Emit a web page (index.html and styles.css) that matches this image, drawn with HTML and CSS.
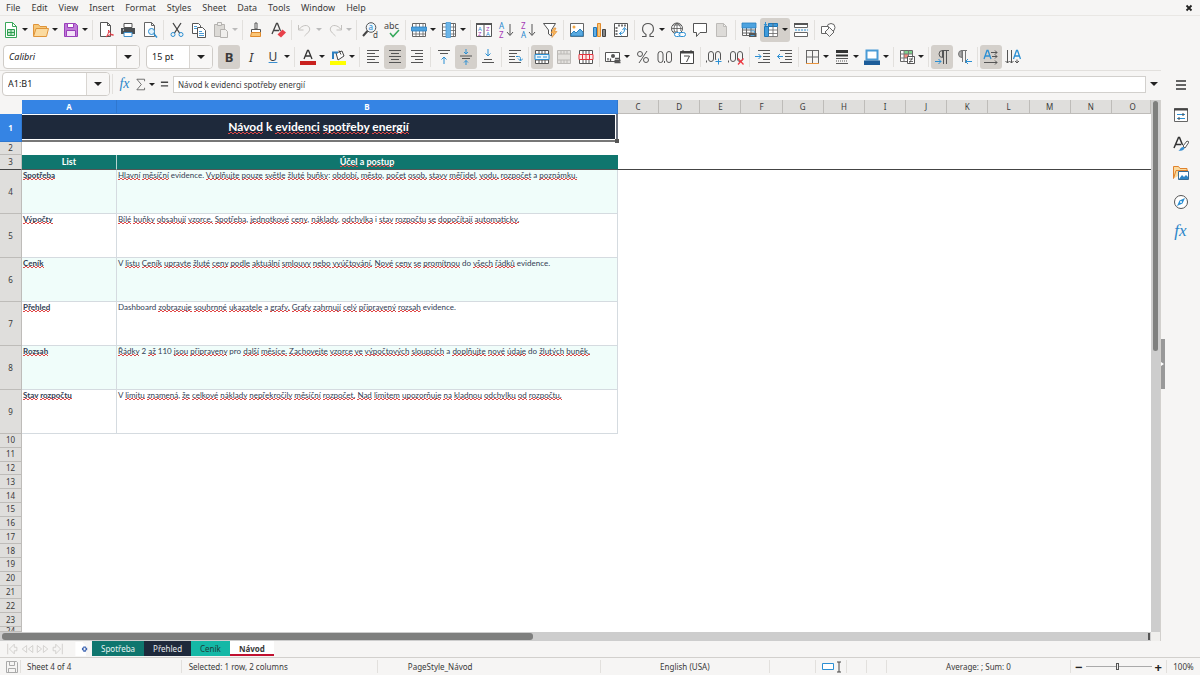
FILE: index.html
```html
<!DOCTYPE html>
<html lang="cs">
<head>
<meta charset="utf-8">
<title>Návod</title>
<link rel="stylesheet" href="styles.css">
</head>
<body>
<svg class="defs" aria-hidden="true">
  <symbol id="new" viewBox="0 0 16 16"><path d="M2.500 .5h7l4 4v11h-11z" fill="#fff" stroke="#3aa75a"/><path d="M9.500.5v4h4" fill="none" stroke="#3aa75a"/><path d="M4.500 7.500h7v6h-7zM4.500 10.500h7M8 7.500v6" fill="#bfe8c8" stroke="#2e9e50"/></symbol>
  <symbol id="open" viewBox="0 0 16 16"><path d="M.5 14V2.500h5l1.500 2h6.500V7" fill="#f6c87a" stroke="#e0953a"/><path d="M.5 14.500l2.500-8h12.500l-2 8z" fill="#fbdba0" stroke="#e0953a"/></symbol>
  <symbol id="save" viewBox="0 0 16 16"><path d="M1.500 1.500h11l2 2v11h-13z" fill="#c07bd8" stroke="#9a3fbb"/><path d="M4.500 1.500h6v4h-6z" fill="#fff" stroke="#9a3fbb"/><path d="M3.500 8.500h9v6h-9z" fill="#f3e2f8" stroke="#9a3fbb"/></symbol>
  <symbol id="pdf" viewBox="0 0 16 16"><path d="M2.500.5h7l3 3v11h-10zM9.500.5v3h3" fill="#fff" stroke="#555"/><path d="M8 15c2-2 3-5 2.500-7C12 11 13 13 15.500 13 12 12.500 10 13 8 15z" fill="none" stroke="#e0353f"/></symbol>
  <symbol id="print" viewBox="0 0 16 16"><path d="M4 1.500h8v4H4z" fill="#fff" stroke="#555"/><path d="M1 6h14v6H1z" fill="#4b4f52"/><path d="M4 10.500h8v4H4z" fill="#fff" stroke="#3f8fc9"/><path d="M3 8h1" stroke="#fff"/></symbol>
  <symbol id="preview" viewBox="0 0 16 16"><path d="M2.500.5h7l3 3v11h-10zM9.500.5v3h3" fill="#fff" stroke="#666"/><circle cx="9.500" cy="9.500" r="3" fill="#e2f2fc" stroke="#2b8fd3"/><path d="M12 12l3 3.500" stroke="#2b8fd3" stroke-width="1.500"/></symbol>
  <symbol id="cut" viewBox="0 0 16 16"><path d="M4 1l6.500 10M12 1L5.500 11" stroke="#444" stroke-width="1.300"/><circle cx="4" cy="12.500" r="2" fill="none" stroke="#2b8fd3"/><circle cx="12" cy="12.500" r="2" fill="none" stroke="#2b8fd3"/></symbol>
  <symbol id="copy" viewBox="0 0 16 16"><path d="M1.500 1.500h6l2 2v8h-8z" fill="#fff" stroke="#555"/><path d="M6.500 5.500h5l3 3v7h-8z" fill="#fff" stroke="#555"/><path d="M3 4.500h3M3 6.500h3M8 9.500h3M8 11.500h5M8 13.500h5" stroke="#4a9bd5"/></symbol>
  <symbol id="paste" viewBox="0 0 16 16"><path d="M1.500 2.500h10v12h-10z" fill="#dcdad6" stroke="#b5b3b0"/><path d="M4.500.5h4v3h-4zM7.500 7.500h5l2 2v6h-7z" fill="#f0efed" stroke="#b5b3b0"/></symbol>
  <symbol id="brush" viewBox="0 0 16 16"><path d="M7 1h2v6H7zM3.500 7.500h9v3h-9z" fill="#fff" stroke="#555"/><path d="M3.500 10.500h9v4h-10z" fill="#fbc677" stroke="#e08a2c"/></symbol>
  <symbol id="clear" viewBox="0 0 16 16"><path d="M2 12L6.500 1.500h1L10.500 9M4 8.500h5" fill="none" stroke="#444" stroke-width="1.300"/><path d="M7.500 12.500l5-5 3.500 3-5 5z" fill="#e8414a"/></symbol>
  <symbol id="undo" viewBox="0 0 16 16"><path d="M1.500 3v5h5M2 7.500C5 3 11 2 12.500 6c1 3-2 5-5 8" fill="none" stroke="#c4c2bf"/></symbol>
  <symbol id="redo" viewBox="0 0 16 16"><path d="M14.500 3v5h-5M14 7.500C11 3 5 2 3.500 6c-1 3 2 5 5 8" fill="none" stroke="#c4c2bf"/></symbol>
  <symbol id="row" viewBox="0 0 16 16"><path d="M1.500 1.500h13v13h-13z" fill="#fff" stroke="#666"/><path d="M5 1.500v13M8.500 1.500v13M12 1.500v13M1.500 12h13" fill="none" stroke="#666" stroke-width=".8"/><path d="M.5 5h15v4H.5z" fill="#4da3df" stroke="#2b7fc0" stroke-width=".8"/></symbol>
  <symbol id="col" viewBox="0 0 16 16"><path d="M1.500 1.500h13v13h-13z" fill="#fff" stroke="#666"/><path d="M1.500 5h13M1.500 8.500h13M1.500 12h13M12.500 1.500v13" fill="none" stroke="#666" stroke-width=".8"/><path d="M5 .5h4.500v15H5z" fill="#6bb5e8" stroke="#4a9bd5" stroke-width=".8"/></symbol>
  <symbol id="filter" viewBox="0 0 16 16"><path d="M1.500 1.500h12L9.500 8v6l-3-2V8z" fill="#fff" stroke="#555"/><path d="M12 6l-3 5h2.500L10 15.500l5-6h-2.500L14 6z" fill="#f9b85e" stroke="#e0892b" stroke-width=".6"/></symbol>
  <symbol id="image" viewBox="0 0 16 16"><path d="M1.500 1.500h13v13h-13z" fill="#fff" stroke="#666"/><circle cx="5" cy="5" r="1.500" fill="#f5a742"/><path d="M2 14v-2l3-3 2 2 4-4 3 3v4z" fill="#5aaae0" stroke="#2c83c0"/></symbol>
  <symbol id="chart" viewBox="0 0 16 16"><path d="M2.500 5.500h3v9h-3z" fill="#63aee4" stroke="#2277b8"/><path d="M6.500 1.500h3v13h-3z" fill="#fbc677" stroke="#e08a2c"/><path d="M11.500 7.500h3v7h-3z" fill="#888" stroke="#444"/></symbol>
  <symbol id="pivot" viewBox="0 0 16 16"><path d="M1.500 1.500h13v13h-13z" fill="#fff" stroke="#555"/><path d="M5 3.500h8M3.500 5v8" stroke="#777" stroke-width="2" stroke-dasharray="2 1"/><path d="M6.500 11.500c4 0 5-1 5-5M9.500 8l2-2.500L13.500 8M8.500 9.500l-2 2 2 2" fill="none" stroke="#2b8fd3"/></symbol>
  <symbol id="omega" viewBox="0 0 16 16"><path d="M2 14.500h4v-2C.5 9 2 1.500 8 1.500s7.500 7.500 2 11v2h4" fill="none" stroke="#555" stroke-width="1.100"/></symbol>
  <symbol id="link" viewBox="0 0 16 16"><circle cx="7" cy="6.500" r="5.500" fill="#fff" stroke="#555"/><path d="M1.500 6.500h11M7 1v11M3 3h8M3 10h5M7 1C3 4 3 9 7 12M7 1c4 3 4 6 3.500 8" fill="none" stroke="#555" stroke-width=".8"/><rect x="4.500" y="10.500" width="6" height="4" rx="2" fill="#fff" stroke="#2b8fd3"/><rect x="9" y="10.500" width="6.500" height="4" rx="2" fill="#fff" fill-opacity=".7" stroke="#2b8fd3"/></symbol>
  <symbol id="comment" viewBox="0 0 16 16"><path d="M1.500 1.500h13v9H8l-3.500 4v-4h-3z" fill="#fff" stroke="#555"/></symbol>
  <symbol id="doc" viewBox="0 0 16 16"><path d="M2.500 1.500h7l3 3v10h-10zM9.500 1.500v3h3" fill="#dddbd8" stroke="#bdbbb8"/></symbol>
  <symbol id="headfoot" viewBox="0 0 16 16"><path d="M1.500 1.500h13v12h-13zM1.500 8h13M1.500 11h13M5.500 1.500v12M10 1.500v12" fill="#fff" stroke="#666"/><path d="M1 1h14v5H1z" fill="#4da3df" stroke="#277fbf" stroke-width=".8"/><path d="M8 11h7.500v4H8z" fill="#555"/><path d="M9.500 9h4v2M9.500 13.500h4" fill="none" stroke="#4da3df"/></symbol>
  <symbol id="freeze" viewBox="0 0 16 16"><path d="M5.500 5h9v9.500h-9z" fill="#fff"/><path d="M1.500 4.500h4v10h-4zM5.500 1.500h9v3h-9z" fill="#3f9bdc" stroke="#1f76b5"/><path d="M10 1.500v13M5.500 8h9M5.500 11.500h9M14.500 5v9.500h-9" fill="none" stroke="#666" stroke-width=".8"/><path d="M2.500 0v4M1 2l1.500 2L4 2" fill="none" stroke="#2b8fd3"/></symbol>
  <symbol id="split" viewBox="0 0 16 16"><path d="M1.500 1.500h13v4h-13zM1.500 10.500h13v4h-13z" fill="#fff" stroke="#666"/><path d="M1 2h14" stroke="#555" stroke-width="2"/><path d="M2 8h13" stroke="#2b8fd3" stroke-dasharray="2 1"/></symbol>
  <symbol id="shapes" viewBox="0 0 16 16"><circle cx="11" cy="5.500" r="4" fill="#fff" stroke="#666"/><path d="M1.500 4.500h7v7h-7z" fill="#fff" stroke="#666"/><path d="M9.500 5.500l4.500 4.500-4.500 4.500L5 10z" fill="#f6f5f4" stroke="#666"/></symbol>

  <symbol id="fcolor" viewBox="0 0 16 16"><path d="M4 10L7.500 1.500h1L12 10M5 7h6" fill="none" stroke="#333" stroke-width="1.300"/><path d="M0 12h16v4H0z" fill="#c9211e"/></symbol>
  <symbol id="fill" viewBox="0 0 16 16"><path d="M6 4l6-2 2 5-6 4z" fill="#fff" stroke="#444"/><path d="M9 1.500l2 4" stroke="#444"/><path d="M3 10V3.500h5" fill="none" stroke="#2b7fc0" stroke-width="2"/><path d="M0 12h16v4H0z" fill="#ff0"/></symbol>
  <symbol id="left" viewBox="0 0 16 16"><path d="M2 1.500h12M2 4.500h8M2 7.500h12M2 10.500h8M2 13.500h12" stroke="#555"/></symbol>
  <symbol id="center" viewBox="0 0 16 16"><path d="M2 1.500h12M4 4.500h8M2 7.500h12M4 10.500h8M2 13.500h12" stroke="#555"/></symbol>
  <symbol id="right" viewBox="0 0 16 16"><path d="M2 1.500h12M6 4.500h8M2 7.500h12M6 10.500h8M2 13.500h12" stroke="#555"/></symbol>
  <symbol id="top" viewBox="0 0 16 16"><path d="M2 1.500h12M4 4.500h8" stroke="#555"/><path d="M8 15V8M5.500 10.500L8 8l2.500 2.500" fill="none" stroke="#2b8fd3"/></symbol>
  <symbol id="middle" viewBox="0 0 16 16"><path d="M2 7h12M4 9.500h8" stroke="#555"/><path d="M8 0v5M6 3l2 2 2-2M8 16v-4.500M6 13.500l2-2 2 2" fill="none" stroke="#2b8fd3"/></symbol>
  <symbol id="bottom" viewBox="0 0 16 16"><path d="M4 10.500h8M2 13.500h12" stroke="#555"/><path d="M8 0v7M5.500 4.500L8 7l2.500-2.500" fill="none" stroke="#2b8fd3"/></symbol>
  <symbol id="wrap" viewBox="0 0 16 16"><path d="M2 1.500h12M2 4.500h8M2 7.500h6M2 10.500h6M2 13.500h12" stroke="#555"/><path d="M9 7.500h2.500c2 0 2 1 2 4M11 9.500l2.500 2.500 2.500-2.500" fill="none" stroke="#2b8fd3"/></symbol>
  <symbol id="merge" viewBox="0 0 16 16"><path d="M1.500 1.500h13v13h-13zM1 5h14M1 11h14M5 1v4M8 1v4M11 1v4M5 11v4M8 11v4M11 11v4" fill="#fff" stroke="#555"/><path d="M1 5.500h14v5H1z" fill="#e9f5fd" stroke="#2b8fd3"/><path d="M3 8h4M9 8h4" stroke="#2b8fd3"/></symbol>
  <symbol id="mergeoff" viewBox="0 0 16 16"><path d="M1.500 1.500h13v13h-13zM1 5h14M1 11h14M5 1v4M8 1v4M11 1v4M5 11v4M8 11v4M11 11v4" fill="#e3e1de" stroke="#bbb9b6"/></symbol>
  <symbol id="unmerge" viewBox="0 0 16 16"><path d="M1.500 1.500h13v13h-13zM5 1v4M8 1v4M11 1v4M5 11v4M8 11v4M11 11v4" fill="#fff" stroke="#555"/><path d="M1 5.500h14v5H1zM4.500 5.500v5M8 5.500v5M11.500 5.500v5" fill="#fdecec" stroke="#e0353f"/></symbol>
  <symbol id="money" viewBox="0 0 16 16"><path d="M.5 3.500h14v9H.5z" fill="#fff" stroke="#555"/><circle cx="8" cy="7" r="2" fill="#555"/><path d="M3 11.500V9M5.500 12V9.500M10 9.500h5M9.500 11.500h6M9.500 13.500h6" stroke="#555" stroke-width="1.300"/></symbol>
  <symbol id="percent" viewBox="0 0 16 16"><circle cx="5" cy="5" r="2.500" fill="none" stroke="#555"/><circle cx="11" cy="11" r="2.500" fill="none" stroke="#555"/><path d="M12 2L4 14" stroke="#555"/></symbol>
  <symbol id="number" viewBox="0 0 16 16"><rect x="1" y="2.500" width="5" height="11" rx="2.500" fill="none" stroke="#555"/><rect x="9.500" y="2.500" width="5" height="11" rx="2.500" fill="none" stroke="#555"/><path d="M7.500 12v2" stroke="#555"/></symbol>
  <symbol id="date" viewBox="0 0 16 16"><path d="M1.500 2.500h13v12h-13z" fill="#fff" stroke="#444"/><path d="M1 3.500h14" stroke="#444" stroke-width="2"/><path d="M4 1v3M12 1v3M5 7h5.500L7.500 13" fill="none" stroke="#444"/></symbol>
  <symbol id="adddec" viewBox="0 0 16 16"><rect x="2.500" y="2.500" width="5" height="10" rx="2.500" fill="none" stroke="#555"/><rect x="9.500" y="2.500" width="5" height="10" rx="2.500" fill="none" stroke="#555"/><path d="M.5 11.500v2" stroke="#555"/><path d="M12.500 9v7M9 12.500h7" stroke="#f6f5f4" stroke-width="3"/><path d="M12.500 9.500v6M9.500 12.500h6" stroke="#2b8fd3"/></symbol>
  <symbol id="deldec" viewBox="0 0 16 16"><rect x="2.500" y="2.500" width="5" height="10" rx="2.500" fill="none" stroke="#555"/><rect x="9.500" y="2.500" width="5" height="10" rx="2.500" fill="none" stroke="#555"/><path d="M.5 11.500v2" stroke="#555"/><path d="M10 9.500l5.500 6M15.500 9.500l-5.500 6" stroke="#f0353f" stroke-width="1.200"/></symbol>
  <symbol id="indent" viewBox="0 0 16 16"><path d="M3 1.500h12M8 4.500h7M8 7.500h7M8 10.500h7M3 13.500h12" stroke="#555"/><path d="M0 7.500h6M3.500 5L6 7.500 3.500 10" fill="none" stroke="#2b8fd3"/></symbol>
  <symbol id="outdent" viewBox="0 0 16 16"><path d="M3 1.500h12M8 4.500h7M8 7.500h7M8 10.500h7M3 13.500h12" stroke="#555"/><path d="M6 7.500H.5M3 5L.5 7.500 3 10" fill="none" stroke="#2b8fd3"/></symbol>
  <symbol id="borders" viewBox="0 0 16 16"><path d="M2.500 2v12.500M8.500 2v12.500M14.500 2v12.500M2 1.500h13M2 8h13" fill="none" stroke="#666"/><path d="M2 14.500h13" stroke="#e9953f"/></symbol>
  <symbol id="lines" viewBox="0 0 16 16"><path d="M2 2.500h12" stroke="#333" stroke-width="3"/><path d="M2 6.500h12" stroke="#333" stroke-width="2"/><path d="M2 9.500h12M2 14.500h12" stroke="#555"/><path d="M2 12h12" stroke="#555" stroke-dasharray="1 1"/></symbol>
  <symbol id="bcolor" viewBox="0 0 16 16"><path d="M2.500 1.500h11v9h-11z" fill="#fff" stroke="#4a9bd5" stroke-width="2"/><path d="M0 11.500h16V16H0z" fill="#1c5c99"/></symbol>
  <symbol id="cond" viewBox="0 0 16 16"><path d="M1.500 1.500h12v11h-12z" fill="#fff" stroke="#666"/><path d="M5 2h8v3H5z" fill="#7dd28c"/><path d="M5 5h5v4H5z" fill="#f58b7f"/><path d="M1.500 5h12M1.500 9h12M5 1.500v11M9.500 1.500v11" stroke="#777" fill="none"/><path d="M8.500 7.500h7v7h-7z" fill="#fff" stroke="#555"/><path d="M10 10h4M10 12.500h4M13.500 8.500L10.500 14" stroke="#444" stroke-width=".8"/></symbol>
  <symbol id="ltr" viewBox="0 0 16 16"><path d="M8.500 1.500a3.500 3.500 0 0 0 0 7zM9.500 15V1.500M12.500 15V1.500M8 1.500h7" fill="none" stroke="#555"/><path d="M1 12.500h6M4.500 10L7 12.500 4.500 15" fill="none" stroke="#2b8fd3"/></symbol>
  <symbol id="rtl" viewBox="0 0 16 16"><path d="M6 1.500a3.500 3.500 0 0 0 0 7z" fill="#aaa" stroke="#777"/><path d="M6.500 13V1.500M9.500 14V1.500M5 1.500h6" fill="none" stroke="#777"/><path d="M16 12.500h-6M12 10l-2.500 2.500L12 15" fill="none" stroke="#2b8fd3"/></symbol>
  <symbol id="horiz" viewBox="0 0 16 16"><path d="M1 10L4 1.500h1L8 10M2 7h5" fill="none" stroke="#2b8fd3" stroke-width="1.300"/><path d="M8 3.500h6M9 7.500h5M1 13.500h13M12 1.500l2 2-2 2M12 5.500l2 2-2 2M12 11.500l2 2-2 2" fill="none" stroke="#555"/></symbol>
  <symbol id="vert" viewBox="0 0 16 16"><path d="M8.500 10L11.500 1.500h1L15.500 10M9.500 7h5" fill="none" stroke="#2b8fd3" stroke-width="1.300"/><path d="M2.500 1v13M6.500 1v13M12 10.500V14M.5 12l2 2 2-2M4.500 12l2 2 2-2M10 12l2 2 2-2" fill="none" stroke="#555"/></symbol>

  <symbol id="props" viewBox="0 0 16 16"><path d="M1.500 1.500h13v13h-13z" fill="#fff" stroke="#666"/><path d="M1 2.500h14" stroke="#444" stroke-width="2"/><path d="M4 7.500h8M4 11.500h8" stroke="#2b8fd3"/><path d="M10 6v3M6 10v3" stroke="#444"/></symbol>
  <symbol id="stylesic" viewBox="0 0 16 16"><path d="M1 12L5.500 1.500h1L9.500 9M3 8.500h5" fill="none" stroke="#333" stroke-width="1.500"/><path d="M10 10l4-5 2 1-4 6z" fill="#fff" stroke="#555"/><path d="M5 15c2 0 2-4 5-4s2 4-5 4z" fill="#3a8fd0"/></symbol>
  <symbol id="gallery" viewBox="0 0 16 16"><path d="M.5 13.500v-12h5l1.500 2h7V6" fill="#fbdba0" stroke="#e0822c"/><path d="M.5 13.500L3 5.500h12" fill="none" stroke="#e0822c"/><path d="M5.500 6.500h10v8h-10z" fill="#fff" stroke="#3a6d94"/><path d="M6 14l3-4 2 2 2-2 2 2v2z" fill="#2f86c6"/></symbol>
  <symbol id="nav" viewBox="0 0 16 16"><circle cx="8" cy="8" r="6.500" fill="#fff" stroke="#555"/><path d="M12 4L9.500 9.500 4 12l2.500-5.500z" fill="#2b8fd3"/><circle cx="8" cy="8" r="1" fill="#fff"/></symbol>
  <symbol id="floppy" viewBox="0 0 12 12"><path d="M.5.5h10l1 1v10H.5zM3.500.5v4h5v-4M2.500 11V7.500h7V11" fill="none" stroke="#aaa"/></symbol>
  <symbol id="first" viewBox="0 0 16 16"><path d="M2.500 2v12M4.500 8L10 2.500v3.500h3v4h-3v3.500z" fill="none" stroke="#cfcdca"/></symbol>
  <symbol id="prev" viewBox="0 0 16 16"><path d="M2 8l5-4v8zM9 8l5-4v8z" fill="none" stroke="#cfcdca"/></symbol>
</svg>

<header>
  <nav class="menubar">
    <button>File</button><button>Edit</button><button>View</button><button>Insert</button><button>Format</button><button>Styles</button><button>Sheet</button><button>Data</button><button>Tools</button><button>Window</button><button>Help</button>
    <button class="close" aria-label="Close document"><svg viewBox="0 0 8 8"><path d="M1.500 1.500l5 5M6.500 1.500l-5 5" stroke="#222" stroke-width="1.800"/></svg></button>
  </nav>

  <div class="toolbar">
    <button class="dd" aria-label="New"><svg><use href="#new"/></svg><i></i></button>
    <button class="dd" aria-label="Open"><svg><use href="#open"/></svg><i></i></button>
    <button class="dd" aria-label="Save"><svg><use href="#save"/></svg><i></i></button>
    <hr>
    <button aria-label="Export as PDF"><svg><use href="#pdf"/></svg></button>
    <button aria-label="Print"><svg><use href="#print"/></svg></button>
    <button aria-label="Print preview"><svg><use href="#preview"/></svg></button>
    <hr>
    <button aria-label="Cut"><svg><use href="#cut"/></svg></button>
    <button aria-label="Copy"><svg><use href="#copy"/></svg></button>
    <button class="dd off" aria-label="Paste"><svg><use href="#paste"/></svg><i></i></button>
    <hr>
    <button aria-label="Clone formatting"><svg><use href="#brush"/></svg></button>
    <button aria-label="Clear formatting"><svg><use href="#clear"/></svg></button>
    <hr>
    <button class="dd off" aria-label="Undo"><svg><use href="#undo"/></svg><i></i></button>
    <button class="dd off" aria-label="Redo"><svg><use href="#redo"/></svg><i></i></button>
    <hr>
    <button aria-label="Find and replace"><svg viewBox="0 0 16 16"><circle cx="9" cy="5.500" r="4.800" fill="#eef7fd" stroke="#555"/><path d="M5.500 9L1 14" stroke="#444" stroke-width="2"/><text x="6.600" y="8" class="g8 blue">a</text><text x="11" y="15.500" class="g8">d</text></svg></button>
    <button aria-label="Spelling"><svg viewBox="0 0 16 16"><text x="0" y="7" class="g9">abc</text><path d="M6 11l3 3.500L15 8" fill="none" stroke="#35a85a" stroke-width="1.500"/></svg></button>
    <hr>
    <button class="dd" aria-label="Row"><svg><use href="#row"/></svg><i></i></button>
    <button class="dd" aria-label="Column"><svg><use href="#col"/></svg><i></i></button>
    <hr>
    <button aria-label="Sort"><svg viewBox="0 0 16 16"><path d="M.5 1.500h15v13H.5zM8 3v11.500" fill="#fff" stroke="#555"/><path d="M0 2h16" stroke="#555" stroke-width="2"/><text x="2" y="8.500" class="g6 blue">A</text><text x="2" y="14" class="g6 purple">Z</text><text x="10" y="8.500" class="g6 purple">Z</text><text x="10" y="14" class="g6 blue">A</text></svg></button>
    <button aria-label="Sort ascending"><svg viewBox="0 0 16 16"><text x="1" y="7" class="g8 blue">A</text><text x="1" y="15.500" class="g8 purple">Z</text><path d="M12 2v11M9 10l3 3.500 3-3.500" fill="none" stroke="#555"/></svg></button>
    <button aria-label="Sort descending"><svg viewBox="0 0 16 16"><text x="1" y="7" class="g8 purple">Z</text><text x="1" y="15.500" class="g8 blue">A</text><path d="M12 2v11M9 10l3 3.500 3-3.500" fill="none" stroke="#555"/></svg></button>
    <button aria-label="AutoFilter"><svg><use href="#filter"/></svg></button>
    <hr>
    <button aria-label="Image"><svg><use href="#image"/></svg></button>
    <button aria-label="Chart"><svg><use href="#chart"/></svg></button>
    <button aria-label="Pivot table"><svg><use href="#pivot"/></svg></button>
    <hr>
    <button class="dd" aria-label="Special character"><svg><use href="#omega"/></svg><i></i></button>
    <button aria-label="Hyperlink"><svg><use href="#link"/></svg></button>
    <button aria-label="Comment"><svg><use href="#comment"/></svg></button>
    <button aria-label="Headers and footers"><svg><use href="#doc"/></svg></button>
    <hr>
    <button aria-label="Print area"><svg><use href="#headfoot"/></svg></button>
    <button class="dd on" aria-label="Freeze rows and columns"><svg><use href="#freeze"/></svg><i></i></button>
    <button aria-label="Split window"><svg><use href="#split"/></svg></button>
    <hr>
    <button aria-label="Draw functions"><svg><use href="#shapes"/></svg></button>
  </div>

  <div class="toolbar format">
    <div class="combo font"><input aria-label="Font name" value="Calibri"><button aria-label="Font list"><i></i></button></div>
    <div class="combo size"><input aria-label="Font size" value="15 pt"><button aria-label="Size list"><i></i></button></div>
    <button class="on bold" aria-label="Bold">B</button>
    <button class="italic" aria-label="Italic">I</button>
    <button class="dd under" aria-label="Underline"><span>U</span><i></i></button>
    <hr>
    <button class="dd" aria-label="Font color"><svg><use href="#fcolor"/></svg><i></i></button>
    <button class="dd" aria-label="Background color"><svg><use href="#fill"/></svg><i></i></button>
    <hr>
    <button aria-label="Align left"><svg><use href="#left"/></svg></button>
    <button class="on" aria-label="Center"><svg><use href="#center"/></svg></button>
    <button aria-label="Align right"><svg><use href="#right"/></svg></button>
    <hr>
    <button aria-label="Align top"><svg><use href="#top"/></svg></button>
    <button class="on" aria-label="Center vertically"><svg><use href="#middle"/></svg></button>
    <button aria-label="Align bottom"><svg><use href="#bottom"/></svg></button>
    <hr>
    <button aria-label="Wrap text"><svg><use href="#wrap"/></svg></button>
    <hr>
    <button class="on" aria-label="Merge and center"><svg><use href="#merge"/></svg></button>
    <button aria-label="Merge cells"><svg><use href="#mergeoff"/></svg></button>
    <button aria-label="Unmerge cells"><svg><use href="#unmerge"/></svg></button>
    <hr>
    <button class="dd" aria-label="Currency"><svg><use href="#money"/></svg><i></i></button>
    <button aria-label="Percent"><svg><use href="#percent"/></svg></button>
    <button aria-label="Number"><svg><use href="#number"/></svg></button>
    <button aria-label="Date"><svg><use href="#date"/></svg></button>
    <hr>
    <button aria-label="Add decimal place"><svg><use href="#adddec"/></svg></button>
    <button aria-label="Delete decimal place"><svg><use href="#deldec"/></svg></button>
    <hr>
    <button aria-label="Increase indent"><svg><use href="#indent"/></svg></button>
    <button aria-label="Decrease indent"><svg><use href="#outdent"/></svg></button>
    <hr>
    <button class="dd" aria-label="Borders"><svg><use href="#borders"/></svg><i></i></button>
    <button class="dd" aria-label="Border style"><svg><use href="#lines"/></svg><i></i></button>
    <button class="dd" aria-label="Border color"><svg><use href="#bcolor"/></svg><i></i></button>
    <hr>
    <button class="dd" aria-label="Conditional formatting"><svg><use href="#cond"/></svg><i></i></button>
    <hr>
    <button class="on" aria-label="Left to right"><svg><use href="#ltr"/></svg></button>
    <button aria-label="Right to left"><svg><use href="#rtl"/></svg></button>
    <hr>
    <button class="on" aria-label="Text horizontal"><svg><use href="#horiz"/></svg></button>
    <button aria-label="Text vertical"><svg><use href="#vert"/></svg></button>
  </div>
</header>

<main>
  <section class="work">
    <div class="formula">
      <div class="combo name"><input aria-label="Name box" value="A1:B1"><button aria-label="Names"><i></i></button></div>
      <hr>
      <button class="fx" aria-label="Function wizard">fx</button>
      <button class="sum" aria-label="Select function"><svg viewBox="0 0 16 16"><path d="M13 4V1.500H3.500L9 8l-5.500 6.500H13V12" fill="none" stroke="#555"/></svg><i></i></button>
      <button class="eq" aria-label="Formula"><svg viewBox="0 0 10 8"><path d="M1 2h8M1 6h8" stroke="#444" stroke-width="1.500"/></svg></button>
      <input class="line" aria-label="Input line" value="Návod k evidenci spotřeby energií">
      <button class="more" aria-label="Expand formula bar"><i></i></button>
    </div>

    <div class="pane">
      <div class="cells">
        <table>
          <colgroup><col class="c-num"><col class="c-a"><col class="c-b"><col span="12"><col class="c-o"></colgroup>
          <thead><tr><th></th><th class="sel">A</th><th class="sel">B</th><th>C</th><th>D</th><th>E</th><th>F</th><th>G</th><th>H</th><th>I</th><th>J</th><th>K</th><th>L</th><th>M</th><th>N</th><th>O</th></tr></thead>
          <tbody>
            <tr class="r1"><th class="sel">1</th><td colspan="2" class="title"><div><u>Návod</u> k <u>evidenci</u> <u>spotřeby</u> <u>energií</u></div></td><td colspan="13"></td></tr>
            <tr class="r2"><th>2</th><td colspan="15"></td></tr>
            <tr class="r3"><th>3</th><td class="head">List</td><td class="head"><u>Účel</u> a <u>postup</u></td><td colspan="13"></td></tr>
            <tr class="item tint"><th>4</th><td><u>Spotřeba</u></td><td><u>Hlavní</u> <u>měsíční</u> evidence. <u>Vyplňujte</u> <u>pouze</u> <u>světle</u> <u>žluté</u> <u>buňky</u>: <u>období,</u> <u>město</u>, <u>počet</u> <u>osob,</u> <u>stavy</u> <u>měřidel</u>, <u>vodu,</u> <u>rozpočet</u> a <u>poznámku.</u></td><td colspan="13"></td></tr>
            <tr class="item"><th>5</th><td><u>Výpočty</u></td><td><u>Bílé</u> <u>buňky</u> <u>obsahují</u> <u>vzorce.</u> <u>Spotřeba</u>, <u>jednotkové</u> <u>ceny</u>, <u>náklady</u>, <u>odchylka</u> i <u>stav</u> <u>rozpočtu</u> <u>se</u> <u>dopočítají</u> <u>automaticky.</u></td><td colspan="13"></td></tr>
            <tr class="item tint"><th>6</th><td><u>Ceník</u></td><td>V <u>listu</u> <u>Ceník</u> <u>upravte</u> <u>žluté</u> <u>ceny</u> <u>podle</u> <u>aktuální</u> <u>smlouvy</u> <u>nebo</u> <u>vyúčtování.</u> <u>Nové</u> <u>ceny</u> <u>se</u> <u>promítnou</u> do <u>všech</u> <u>řádků</u> evidence.</td><td colspan="13"></td></tr>
            <tr class="item"><th>7</th><td><u>Přehled</u></td><td>Dashboard <u>zobrazuje</u> <u>souhrnné</u> <u>ukazatele</u> a <u>grafy.</u> <u>Grafy</u> <u>zahrnují</u> <u>celý</u> <u>připravený</u> <u>rozsah</u> evidence.</td><td colspan="13"></td></tr>
            <tr class="item tint"><th>8</th><td><u>Rozsah</u></td><td><u>Řádky</u> 2 <u>až</u> 110 <u>jsou</u> <u>připraveny</u> pro <u>další</u> <u>měsíce.</u> <u>Zachovejte</u> <u>vzorce</u> <u>ve</u> <u>výpočtových</u> <u>sloupcích</u> a <u>doplňujte</u> <u>nové</u> <u>údaje</u> do <u>žlutých</u> <u>buněk.</u></td><td colspan="13"></td></tr>
            <tr class="item"><th>9</th><td><u>Stav</u> <u>rozpočtu</u></td><td>V <u>limitu</u> <u>znamená</u>, <u>že</u> <u>celkové</u> <u>náklady</u> <u>nepřekročily</u> <u>měsíční</u> <u>rozpočet.</u> <u>Nad</u> <u>limitem</u> <u>upozorňuje</u> <u>na</u> <u>kladnou</u> <u>odchylku</u> <u>od</u> <u>rozpočtu.</u></td><td colspan="13"></td></tr>
            <tr><th>10</th><td colspan="15"></td></tr>
            <tr><th>11</th><td colspan="15"></td></tr>
            <tr><th>12</th><td colspan="15"></td></tr>
            <tr><th>13</th><td colspan="15"></td></tr>
            <tr><th>14</th><td colspan="15"></td></tr>
            <tr><th>15</th><td colspan="15"></td></tr>
            <tr><th>16</th><td colspan="15"></td></tr>
            <tr><th>17</th><td colspan="15"></td></tr>
            <tr><th>18</th><td colspan="15"></td></tr>
            <tr><th>19</th><td colspan="15"></td></tr>
            <tr><th>20</th><td colspan="15"></td></tr>
            <tr><th>21</th><td colspan="15"></td></tr>
            <tr><th>22</th><td colspan="15"></td></tr>
            <tr><th>23</th><td colspan="15"></td></tr>
            <tr class="cut"><th><div>24</div></th><td colspan="15"></td></tr>
          </tbody>
        </table>
      </div>
      <div class="vscroll"><div></div></div>
      <div class="hscroll"><div></div><span></span></div>
      <div class="corner"></div>
    </div>

    <nav class="tabs">
      <button aria-label="First sheet"><svg><use href="#first"/></svg></button>
      <button aria-label="Previous sheet"><svg><use href="#prev"/></svg></button>
      <button aria-label="Next sheet"><svg class="flip"><use href="#prev"/></svg></button>
      <button aria-label="Last sheet"><svg class="flip"><use href="#first"/></svg></button>
      <button class="add" aria-label="Add sheet"><svg viewBox="0 0 14 16"><path d="M0 0h8l4 4v12H0z" fill="#fff"/><path d="M10.500 5v6M7.500 8h6" stroke="#3b62b0" stroke-width="3"/><path d="M10.500 6.500v3M9 8h3" stroke="#fff"/></svg></button>
      <button class="tab t1">Spotřeba</button><button class="tab t2">Přehled</button><button class="tab t3">Ceník</button><button class="tab t4">Návod</button>
    </nav>
  </section>

  <aside>
    <button aria-label="Sidebar settings"><svg viewBox="0 0 16 16"><path d="M3 4h10M3 8h10M3 12h10" stroke="#333" stroke-width="1.500"/></svg></button>
    <button aria-label="Properties"><svg><use href="#props"/></svg></button>
    <button aria-label="Styles"><svg><use href="#stylesic"/></svg></button>
    <button aria-label="Gallery"><svg><use href="#gallery"/></svg></button>
    <button aria-label="Navigator"><svg><use href="#nav"/></svg></button>
    <button class="fx" aria-label="Functions">fx</button>
    <button class="grip" aria-label="Show sidebar"><i></i></button>
  </aside>
</main>

<footer>
  <span class="s-save"><svg><use href="#floppy"/></svg></span>
  <span class="s-sheet">Sheet 4 of 4</span>
  <span class="s-sel">Selected: 1 row, 2 columns</span>
  <span class="s-style">PageStyle_Návod</span>
  <span class="s-gap"></span>
  <span class="s-lang">English (USA)</span>
  <span class="s-mid"></span>
  <span class="s-mode"><svg viewBox="0 0 20 12"><path d="M1.500 2.500h11v6h-11z" fill="#fff" stroke="#2b8fd3"/><path d="M16 1h4M18 1v10M16 11h4" stroke="#444" fill="none"/></svg></span>
  <span class="s-cell"></span>
  <span class="s-cell"></span>
  <span class="s-avg">Average: ; Sum: 0</span>
  <span class="s-zoom"><b>−</b><input type="range" aria-label="Zoom" min="0" max="100" value="49"><b>+</b></span>
  <span class="s-pct">100%</span>
</footer>
</body>
</html>
```
FILE: styles.css
```css
* { box-sizing: border-box; }
body {
  margin: 0;
  height: 100vh;
  display: flex;
  flex-direction: column;
  overflow: hidden;
  background: #f6f5f4;
  color: #3a3a3a;
  font: 8px/12px "Noto Sans", sans-serif;
}
button, input { font: inherit; color: inherit; border: 0; background: none; padding: 0; margin: 0; min-width: 0; }
hr { border: 0; border-left: 1px solid #e2e0dd; margin: 2px; height: 20px; flex: none; }
.defs { position: absolute; width: 0; height: 0; }
.g6, .g8, .g9 { font-family: "Noto Sans", sans-serif; fill: #444; }
.g6 { font-size: 6px; }
.g8 { font-size: 8px; }
.g9 { font-size: 9px; }
.blue { fill: #1f87cf; }
.purple { fill: #a63bb5; }

/* caret */
i { display: block; width: 0; border: 3px solid transparent; border-top: 3px solid #222; border-bottom: 0; flex: none; }
.off i { border-top-color: #bbb; }

.menubar { display: flex; align-items: center; height: 16px; padding-left: 6px; gap: 11px; font-size: 9px; border-bottom: 1px solid #e9e7e4; }
.menubar .close { margin-left: auto; margin-right: 7px; width: 8px; height: 8px; }
.close svg { width: 8px; height: 8px; display: block; }

.toolbar { display: flex; align-items: center; height: 27px; white-space: nowrap; }
.toolbar > button { width: 22px; height: 24px; border-radius: 3px; display: flex; align-items: center; justify-content: center; flex: none; }
.toolbar svg { width: 16px; height: 16px; flex: none; overflow: visible; }
.toolbar > .dd { width: 30px; justify-content: flex-start; padding-left: 3px; gap: 3px; }
.toolbar .on { background: #d4d0cb; }
.format { padding-left: 3px; }
.toolbar .bold { font-size: 13px; font-weight: 700; }
.toolbar .italic { font: italic 13px "Noto Sans", sans-serif; }
.under span { width: 16px; font-size: 12px; line-height: 14px; text-decoration: underline; text-decoration-color: #3a8fd0; text-align: center; }

.combo { display: flex; height: 24px; background: #fff; border: 1px solid #cfccc8; border-radius: 4px; overflow: hidden; font-size: 9px; color: #222; flex: none; }
.combo input { flex: 1; padding-left: 5px; }
.combo button { width: 23px; border-left: 1px solid #d9d6d2; background: #f8f7f6; display: flex; align-items: center; justify-content: center; }
.combo i, .more i { border-width: 4px; border-bottom: 0; }
.font { width: 137px; margin-right: 6px; font-style: italic; }
.size { width: 67px; margin-right: 5px; }

main { flex: 1; display: flex; min-height: 0; }
.work { flex: 1; display: flex; flex-direction: column; min-width: 0; border-top: 1px solid #e2e0dd; }
.formula { display: flex; align-items: center; height: 29px; padding: 0 0 3px 2px; flex: none; }
.name { width: 108px; }
.formula button { flex: none; }
.fx { font: italic 14px "Liberation Serif", serif; color: #2b86c9; }
.formula .fx { width: 19px; }
.formula .sum { width: 22px; display: flex; align-items: center; gap: 2px; }
.sum svg { width: 13px; height: 13px; }
.eq { width: 17px; }
.eq svg { width: 9px; height: 8px; display: block; margin: auto; }
.formula .line { flex: 1; height: 17px; background: #fff; border: 1px solid #d2d0cd; padding-left: 4px; }
.more { width: 15px; display: flex; justify-content: center; }

.pane { flex: 1; min-height: 0; display: grid; grid-template: minmax(0, 1fr) 9px / minmax(0, 1fr) 9px; border-right: 1px solid #d2d0cd; }
.cells { background: #fff; overflow: hidden; }
table { width: 100%; height: 100%; table-layout: fixed; border-collapse: separate; border-spacing: 0; }
.c-num { width: 22px; }
.c-a { width: 95px; }
.c-b { width: 501px; }
.c-o { width: 39px; }
th, td { padding: 0; line-height: 10px; }
th { font-weight: 400; background: #dfdedc; border-right: 1px solid #bebcb9; border-bottom: 1px solid #bebcb9; text-align: center; }
thead tr { height: 14px; }
thead th:first-child { background: #f6f5f4; border-color: #f6f5f4; }
thead th:last-child { padding-left: 3px; }
th.sel { background: #3584e4; color: #fff; font-weight: 700; border-color: #2f77cf; }
td { font-family: Lato, sans-serif; color: #334155; white-space: nowrap; overflow: hidden; }
.r1 { height: 28px; }
.r2 { height: 13px; }
.r3 { height: 15px; }
.r3 > * { border-bottom: 1px solid #555; }
.r3 td:last-child, .r3 th { border-bottom-color: #444; }
.title { border-right: 2px solid #6b7280; border-bottom: 2px solid #777; background: #fff; padding: 1px 1px 1px 0; position: relative; overflow: visible; }
.title div { height: 24px; line-height: 24px; background: #1e293b; color: #fff; font-size: 12px; font-weight: 700; text-align: center; }
.title::after { content: ""; position: absolute; right: -3px; bottom: -3px; width: 4px; height: 4px; background: #555; }
.head { background: #0f766e; color: #fff; font-size: 9px; font-weight: 700; text-align: center; border-right: 1px solid #b8d4d1; vertical-align: middle; }
.head + .head { border-right-color: #0f766e; }
.item { height: 44px; }
.item td { vertical-align: top; border-right: 1px solid #d5dbe0; border-bottom: 1px solid #d5dbe0; padding-left: 1px; }
.item td:nth-child(2) { font-weight: 700; }
.item td:last-child { border: 0; }
.tint td:not(:last-child) { background: #f0fdfa; }

/* spelling wave: two rows of alternating dashes */
u {
  text-decoration: none;
  background:
    linear-gradient(90deg, #e04848 50%, transparent 50%) 0 100% / 4px 1px repeat-x,
    linear-gradient(90deg, transparent 50%, #e04848 50%) 0 calc(100% - 1px) / 4px 1px repeat-x;
}
.cut { height: 5px; }
.cut div { height: 4px; overflow: hidden; line-height: 8px; }

.vscroll { background: #cdcdcd; padding: 1px 2px 0 2px; }
.vscroll div { height: 47%; background: #7e7f7e; border-radius: 3px; }
.hscroll { background: #cdcdcd; padding: 1px 1px 1px 2px; display: flex; justify-content: space-between; }
.hscroll div { width: 531px; background: #7e7f7e; border-radius: 3px; }
.hscroll span { width: 2px; background: #555; }
.corner { background: #f0efed; }

.tabs { display: flex; height: 17px; align-items: stretch; padding-left: 5px; border-bottom: 1px solid #d2d0cd; flex: none; }
.tabs svg { width: 15px; height: 14px; display: block; }
.tabs .add { margin-left: 9px; width: 18px; }
.flip { transform: scaleX(-1); }
.tab { padding: 0 9px; margin-bottom: 1px; }
.t1 { background: #0f766e; color: #e6f4f2; }
.t2 { background: #1e293b; color: #e8eaee; }
.t3 { background: #14b8a6; color: #1d3b38; }
.t4 { background: #fff; font-weight: 700; border-bottom: 2px solid #c01030; padding-top: 2px; }

aside { width: 39px; position: relative; display: flex; flex-direction: column; align-items: center; padding-top: 6px; border-bottom: 1px solid #d2d0cd; }
aside button { width: 20px; height: 18px; margin-bottom: 11px; display: flex; align-items: center; justify-content: center; }
aside button:first-child { margin-bottom: 12px; }
aside svg { width: 16px; height: 16px; }
aside .fx { font-size: 17px; }
aside .grip { position: absolute; left: 0; top: 269px; width: 4px; height: 50px; background: #999; justify-content: flex-start; }
.grip i { border: 2px solid transparent; border-left: 3px solid #fff; border-right: 0; }

footer { display: flex; align-items: center; height: 17px; flex: none; }
footer span { height: 13px; border-right: 1px solid #e2e0dd; display: flex; align-items: center; }
.s-save { width: 21px; padding-left: 6px; }
.s-save svg { width: 12px; height: 12px; }
.s-sheet { flex: 157 1 0; padding-left: 6px; }
.s-sel { flex: 192 1 0; padding-left: 7px; }
footer .s-style { flex: 128 1 0; justify-content: center; border: 0; }
.s-gap { flex: 99 1 0; }
.s-lang { flex: 172 1 0; justify-content: center; }
.s-mid { flex: 46 1 0; }
.s-mode { width: 31px; justify-content: center; }
.s-mode svg { width: 20px; height: 12px; }
.s-cell { width: 20px; }
.s-avg { flex: 187 1 0; justify-content: center; }
.s-zoom { width: 96px; padding: 0 4px; gap: 3px; }
.s-zoom b { font-size: 13px; color: #222; }
.s-zoom input { appearance: none; flex: 1; height: 9px; background: linear-gradient(#aaa, #aaa) center / 100% 1px no-repeat; }
.s-zoom input::-webkit-slider-thumb { appearance: none; width: 3px; height: 7px; border: 1px solid #555; background: #eee; }
footer .s-pct { width: 33px; justify-content: center; border: 0; }
```
